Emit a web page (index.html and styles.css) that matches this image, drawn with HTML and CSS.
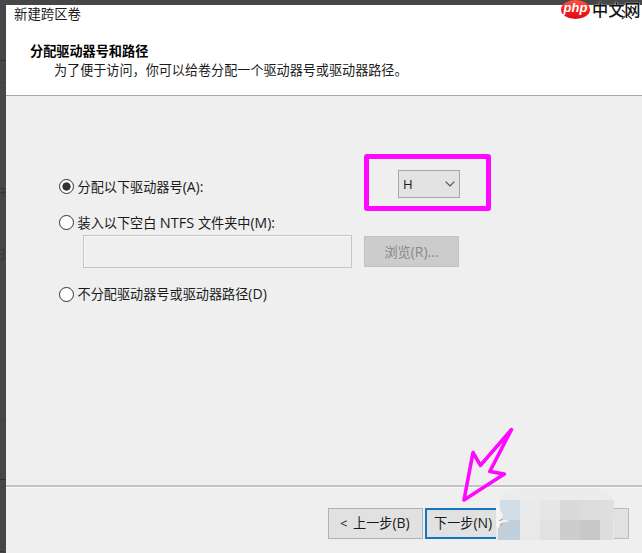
FILE: index.html
```html
<!DOCTYPE html>
<html lang="zh-CN">
<head>
<meta charset="utf-8">
<title>新建跨区卷</title>
<link rel="stylesheet" href="styles.css">
</head>
<body>
<div class="window">
  <header class="header">
    <div class="title">新建跨区卷</div>
    <h1 class="heading">分配驱动器号和路径</h1>
    <p class="intro">为了便于访问，你可以给卷分配一个驱动器号或驱动器路径。</p>
  </header>
  <main class="content">
    <div class="row row-letter">
      <label class="option"><span class="radio checked"></span><span>分配以下驱动器号<span class="key">(A):</span></span></label>
      <div class="highlight">
        <div class="select"><span>H</span>
          <svg width="10" height="6" viewBox="0 0 10 6"><path d="M.6.6 5 4.900 9.400.6" fill="none" stroke="#555" stroke-width="1.3"/></svg>
        </div>
      </div>
    </div>
    <div class="row row-mount">
      <label class="option"><span class="radio"></span><span>装入以下空白 <span class="fs">NTFS </span>文件夹中<span class="key">(M):</span></span></label>
    </div>
    <div class="row row-path">
      <div class="path-input"></div>
      <div class="browse">浏览<span class="key">(R)...</span></div>
    </div>
    <div class="row row-none">
      <label class="option"><span class="radio"></span><span>不分配驱动器号或驱动器路径<span class="key">(D)</span></span></label>
    </div>
  </main>
  <footer class="footer">
    <div class="button back"><span class="lt">&lt;</span>上一步<span class="key">(B)</span></div>
    <div class="button next">下一步<span class="key">(N)</span></div>
    <div class="button cancel"></div>
  </footer>
</div>
<svg class="backdrop-marks" width="6" height="553" viewBox="0 0 6 553">
  <path d="M0 60.5h6M0 479.5h6" stroke="#303030"/>
  <path d="M0 82.5h6M0 420.5h6" stroke="#414141"/>
  <path d="M0 188.5h5M0 192.5h6M3.5 188v8M0 249.5h4v10M0 254.5h4M0 259.5h4M0 551.5h4v2" stroke="#383838" fill="none"/>
</svg>
<svg class="arrow" width="60" height="80" viewBox="455 425 60 80">
  <path d="M511.500 429.500 480.500 465.300 473 452.500 464 500 504.300 474 489.800 471.500Z"/>
</svg>
<svg class="mosaic" width="124" height="66" viewBox="493 487 124 66">
  <path d="M496 506q7-18 27-18h70q21 0 21 20v32H496Z" fill="#ececec"/>
  <path d="M500 500h20v20h-20Z" fill="#d1dde7"/>
  <path d="M498 520h22v20h-22Z" fill="#c2d0dc"/>
  <path d="M520 500h20v20h-20Z" fill="#e8eaec"/>
  <path d="M520 520h20v20h-20Z" fill="#e9e9ea"/>
  <path d="M540 500h20v20h-20Z" fill="#e6e6e6"/>
  <path d="M540 520h20v20h-20Z" fill="#e0e1e1"/>
  <path d="M560 500h20v20h-20Z" fill="#dadada"/>
  <path d="M560 520h20v20h-20Z" fill="#cdcdcd"/>
  <path d="M580 500h20v20h-20Z" fill="#dcdcdc"/>
  <path d="M580 520h20v20h-20Z" fill="#c7c9c8"/>
  <path d="M600 500h14v20h-14Z" fill="#dfdfdf"/>
  <path d="M600 520h13v20h-13Z" fill="#dcdddd"/>
  <path d="M496 506l3-7 1 11 3 5-2 4 9 2-9 2-3 6-2-2Z" fill="#f5f4f2"/>
  <path d="M499 520.500l4-1M500 525.500l3-2" stroke="#999"/>
</svg>
<svg class="close" width="12" height="11" viewBox="0 0 12 11"><path d="M1 1 11 10M11 1 1 10" stroke="#222" stroke-width="1.1"/></svg>
<div class="brand"><span class="php">php</span><span class="site">中文网</span></div>
</body>
</html>
```
FILE: styles.css
```css
* { box-sizing: border-box; }
body {
  position: relative;
  width: 642px;
  height: 553px;
  margin: 0;
  padding: 5px 0 0 6px;
  overflow: hidden;
  background: #474747;
  color: #1a1a1a;
  font: 13.15px/20px "Open Sans", "Noto Sans CJK SC", sans-serif;
  white-space: nowrap;
}
.window { display: flex; flex-direction: column; height: 548px; background: #efefef; }
.header { height: 91px; background: #fff; border-bottom: 1px solid #a8a8a8; }
.title { margin-top: -1px; padding-left: 8px; font-size: 13.4px; }
.heading { margin: 18px 0 0 24px; font-size: 13.15px; line-height: 19px; font-weight: 700; color: #000; }
.intro { margin: -1px 0 0 48px; font-size: 13.1px; line-height: 20px; }
.content { height: 391px; padding-top: 58px; border-bottom: 2px solid #c3c3c3; }
.key { font-size: 14px; }
.fs { font-size: 14.5px; }
.row { display: flex; align-items: center; }
.row-letter { height: 57px; }
.option { display: flex; align-items: center; width: 305px; margin-left: 53px; }
.radio {
  width: 15px;
  height: 15px;
  margin-right: 3.5px;
  flex: none;
  border: 1.3px solid #333;
  border-radius: 50%;
  background: #fff;
}
.checked { background: radial-gradient(circle, #333 0 3.8px, #fff 4.5px); }
.row-letter .option { margin-top: 8px; }
.highlight {
  display: flex;
  width: 127px;
  height: 57px;
  padding: 11px 0 0 29px;
  border: 5px solid #ff08ff;
  border-radius: 3px;
}
.select {
  display: flex;
  align-items: center;
  justify-content: space-between;
  width: 62px;
  height: 28px;
  padding: 0 4px;
  border: 1px solid #a4a8a8;
  background: #e3e3e3;
}
.row-mount { height: 23px; }
.row-path { height: 33px; margin: 1px 0 0 77px; gap: 12px; }
.path-input { width: 269px; height: 33px; border: 1px solid #c6c6c6; background: #efefef; box-shadow: inset 1px 1px #f8f8f8; }
.browse { width: 95px; height: 31px; border: 1px solid #c2c2c2; background: #ccc; color: #898989; text-align: center; line-height: 29px; }
.row-none { height: 20px; margin-top: 16px; }
.footer { display: flex; flex: 1; padding: 20px 0 0 322px; gap: 2px; border-top: 1px solid #fbfbfb; }
.button { display: flex; align-items: center; height: 31px; padding-bottom: 2px; border: 1px solid #adb2b5; background: #e1e1e1; }
.back { width: 95px; padding-left: 11px; }
.lt { width: 13px; font-size: 13px; }
.next { width: 95px; padding-left: 7px; border: 2px solid #1675bd; }
.cancel { width: 107px; border-color: #bbb; }
.backdrop-marks { position: absolute; left: 0; top: 0; }
.arrow { position: absolute; left: 455px; top: 425px; fill: none; stroke: #ff08ff; stroke-width: 3.6; stroke-linejoin: round; }
.mosaic { position: absolute; left: 493px; top: 487px; }
.close { position: absolute; left: 621px; top: 9px; }
.brand { position: absolute; left: 561px; top: 0; display: flex; align-items: flex-start; height: 20px; }
.php {
  width: 29px;
  height: 19px;
  border-radius: 50%;
  background: linear-gradient(#ff5648, #f31b1b 60%, #d90d16);
  color: #fff;
  font: italic 700 13px/16px "Liberation Sans", sans-serif;
  text-align: center;
}
.site { margin-left: 2px; color: #111; font: 500 16.2px/20px "Liberation Sans", "Noto Sans CJK SC", sans-serif; text-shadow: 0 0 1px #fff, 0 0 1px #fff; }
```
